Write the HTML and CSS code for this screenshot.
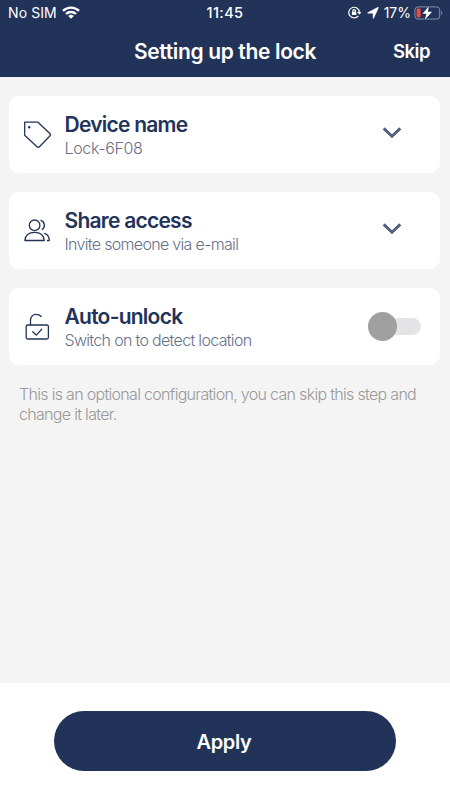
FILE: index.html
```html
<!DOCTYPE html>
<html lang="en">
<head>
<meta charset="utf-8">
<title>Setting up the lock</title>
<link rel="stylesheet" href="styles.css">
</head>
<body>
<div class="screen">
  <header class="header">
    <div class="status">
      <div class="status-left">
        <span class="carrier">No SIM</span>
        <svg class="wifi" width="18" height="13" viewBox="0 0 18 13" fill="none" stroke="#fff" stroke-width="2.4"><path d="M1 4.9a11.5 11.5 0 0 1 16 0M4 8a7.2 7.2 0 0 1 10 0"/><path d="M9 12.8 6.2 10a4 4 0 0 1 5.6 0z" fill="#fff" stroke="none"/></svg>
      </div>
      <span class="clock">11:45</span>
      <div class="status-right">
        <svg width="13" height="13" viewBox="0 0 13 13" fill="none" stroke="#fff" stroke-width="1.2"><path d="M10.3 9.8A5.3 5.3 0 1 1 11.4 6.5M9.6 6.1l1.8 1.5L12.8 6.1"/><path d="M4.8 6V5a1.3 1.3 0 0 1 2.6 0v1"/><rect x="3.9" y="5.7" width="4.4" height="3.4" rx=".4" fill="#fff" stroke="none"/></svg>
        <svg class="arrow" width="12" height="12" viewBox="0 0 12 12" fill="#fff"><path d="M11.5.7 6.7 11.2c-.2.5-.7.4-.7-.1V6.3H1.1c-.6 0-.7-.5-.1-.8L10.9.2c.5-.2.8.1.6.5z" stroke="#fff" stroke-width=".4"/></svg>
        <span class="percent">17%</span>
        <svg class="battery" width="29" height="14" viewBox="0 0 29 14"><rect x=".9" y=".9" width="24.8" height="12.2" rx="3" fill="none" stroke="#8590a7"/><path d="M27.2 4.8c1.5.7 1.5 3.7 0 4.4z" fill="#8590a7"/><rect x="2.6" y="2.5" width="4" height="9" rx="1" fill="#f24a3e"/><path d="M14.9.2 8.5 7.7h3.9L10.8 13.8l7.3-8h-4.2z" fill="#fff" stroke="#22335a" stroke-width=".8" paint-order="stroke"/></svg>
      </div>
    </div>
    <div class="nav">
      <h1 class="title">Setting up the lock</h1>
      <span class="skip">Skip</span>
    </div>
  </header>
  <main class="content">
    <section class="card">
      <svg class="icon" width="28" height="28" viewBox="0 0 28 28"><path d="M1.7 1.2H15L26.6 12.3Q28.1 13.8 26.6 15.3L16.7 25.5Q15.2 27 13.7 25.5L1.7 14.2Z"/><circle class="dot" cx="6.2" cy="6.2" r="1.2"/></svg>
      <div class="text"><h2 class="name">Device name</h2><p class="detail detail-lock">Lock-6F08</p></div>
      <svg class="chevron" width="20" height="12" viewBox="0 0 20 12"><path d="M1.7 1.4 10 9.3l8.3-7.9"/></svg>
    </section>
    <section class="card">
      <svg class="icon" width="28" height="28" viewBox="0 0 28 28"><circle cx="11.6" cy="8.3" r="5.3"/><path d="M1.9 23.5c0-5 4-8.2 9.7-8.2s9.6 3.2 9.6 8.2zM18 3.4a5.3 5.3 0 0 1 1.3 9.1M21.7 16.4c3 1.3 4.6 4 4.6 7.1h-1.9"/></svg>
      <div class="text"><h2 class="name">Share access</h2><p class="detail">Invite someone via e-mail</p></div>
      <svg class="chevron" width="20" height="12" viewBox="0 0 20 12"><path d="M1.7 1.4 10 9.3l8.3-7.9"/></svg>
    </section>
    <section class="card">
      <svg class="icon" width="28" height="28" viewBox="0 0 28 28"><rect x="3.2" y="12" width="22.2" height="14" rx="1.5"/><path d="M7.5 12V7.2c0-3.3 2.2-5.8 5.3-5.8 2.2 0 4 .5 5.4 2.1M9.7 18.8l3.6 3.3 5.4-5.8"/></svg>
      <div class="text"><h2 class="name">Auto-unlock</h2><p class="detail">Switch on to detect location</p></div>
      <div class="toggle"><span class="knob"></span></div>
    </section>
    <p class="hint">This is an optional configuration, you can skip this step and<br>change it later.</p>
  </main>
  <footer class="footer"><button class="apply">Apply</button></footer>
</div>
</body>
</html>
```
FILE: styles.css
```css
* { box-sizing: border-box; }
body, h1, h2, p { margin: 0; }
body { font-family: Inter, "Liberation Sans", sans-serif; }
.screen { width: 450px; height: 800px; display: flex; flex-direction: column; background: #f4f4f4; overflow: hidden; }
.header { height: 77px; background: #22335a; color: #fff; }
.status { height: 25px; display: grid; grid-template-columns: 1fr auto 1fr; align-items: center; padding: 0 7px 0 8px; font-size: 14px; line-height: 25px; }
.status-left, .status-right { display: flex; align-items: center; }
.status-right { justify-content: flex-end; }
.carrier { letter-spacing: .1px; }
.wifi { margin-left: 5px; }
.clock { margin-right: 1px; font-size: 14.5px; font-weight: 500; letter-spacing: .4px; }
.arrow { margin-left: 6px; }
.percent { margin-left: 5px; }
.battery { margin-left: 3px; }
.nav { height: 51px; display: grid; grid-template-columns: 1fr auto 1fr; align-items: center; padding-right: 20px; line-height: 51px; }
.title { grid-column: 2; margin-left: 20px; font-size: 21px; font-weight: 600; letter-spacing: -.35px; white-space: nowrap; }
.skip { justify-self: end; padding-top: 1px; font-size: 18.5px; font-weight: 600; letter-spacing: -.5px; }
.content { flex: 1; padding: 19px 10px 0 9px; }
.card { height: 77px; margin-bottom: 19px; padding: 0 19px 0 14px; display: flex; align-items: center; background: #fff; border-radius: 10px; }
.icon { fill: none; stroke: #22335a; stroke-width: 1.3; stroke-linecap: round; stroke-linejoin: round; flex: none; }
.dot { fill: #22335a; stroke: none; }
.text { flex: 1; padding-top: 1px; margin-left: 13.5px; white-space: nowrap; }
.name { color: #22335a; font-size: 21px; line-height: 26px; font-weight: 600; letter-spacing: -.75px; }
.detail { color: #67718a; font-size: 16px; line-height: 20px; font-weight: 300; letter-spacing: -.68px; }
.detail-lock { letter-spacing: -.35px; }
.chevron { margin: -4px 19px 0 0; fill: none; stroke: #526080; stroke-width: 3; }
.toggle { position: relative; width: 53px; height: 29px; }
.toggle::before { content: ""; position: absolute; right: 0; top: 6px; width: 40px; height: 17px; border-radius: 9px; background: #e4e4e6; }
.knob { display: block; position: relative; width: 29px; height: 29px; border-radius: 50%; background: #a0a0a0; }
.hint { padding-left: 10px; color: #999; font-size: 16px; line-height: 20px; font-weight: 300; letter-spacing: -.69px; white-space: nowrap; }
.footer { height: 117px; padding: 28px 54px; background: #fff; }
.apply { display: block; width: 342px; height: 60px; padding: 1px 2px 0 0; border: 0; border-radius: 30px; background: #22335a; color: #fff; font: 600 20px/60px Inter, sans-serif; letter-spacing: -.3px; }
```
